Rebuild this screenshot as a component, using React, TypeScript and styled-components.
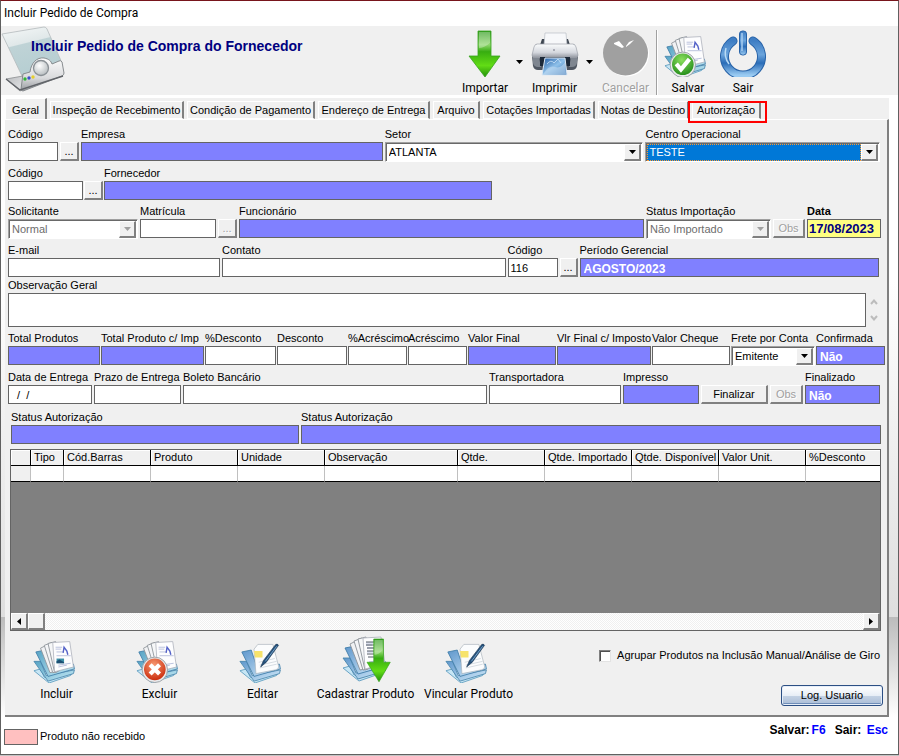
import React, { useId } from "react";
import styled, { createGlobalStyle, css } from "styled-components";

const sans = '"Liberation Sans", Arial, sans-serif';
const ui = 'Roboto, "Noto Sans", sans-serif';
const face = "#f0f0f0";
const edge = "#646464";
const periwinkle = "#8080ff";

const Global = createGlobalStyle`
  * { box-sizing: border-box; }
  body { margin: 0; background: #c4c4c4; font: 11px/15px ${sans}; color: #000; }
  button, input, select, textarea { font: inherit; color: inherit; margin: 0; border-radius: 0; }
`;

/* ---------- window frame ---------- */

const Frame = styled.main`
  display: flex;
  flex-direction: column;
  border: 1px solid #606060;
  border-top-color: #78151c;
  background: #fff;
  margin-bottom: 2px;
`;

const TitleBar = styled.header`
  height: 25px;
  padding-left: 3px;
  font: 12px/24px ${ui};
`;

const Header = styled.section`
  display: flex;
  height: 69px;
  background: ${face};
`;

const Brand = styled.div`
  display: grid;
  width: 457px;
  flex: none;
  & > * { grid-area: 1 / 1; }
`;

const Heading = styled.h1`
  margin: 12px 0 0 30px;
  font: bold 14px/17px ${sans};
  color: #000080;
  white-space: nowrap;
`;

const Tools = styled.nav`
  display: flex;
  padding-top: 4px;
`;

const ToolButton = styled.button<{ $w: number }>`
  display: flex;
  flex-direction: column;
  align-items: center;
  flex: none;
  width: ${p => p.$w}px;
  height: 65px;
  padding: 0;
  border: 0;
  background: none;
  font: 12px/16px ${ui};
  white-space: nowrap;
  & > svg { flex: none; margin-bottom: 3px; }
  &:disabled { color: #a0a0a0; text-shadow: 1px 1px #fff; }
`;

const DropButton = styled.button`
  width: 15px;
  height: 64px;
  padding: 0;
  border: 0;
  background: none;
  line-height: 0;
`;

const Divider = styled.span`
  width: 2px;
  margin: 0 3px 0 2px;
  border-left: 1px solid #a0a0a0;
  border-right: 1px solid #fff;
`;

const Body = styled.section`
  padding: 3px 9px 0 4px;
  background: linear-gradient(#fff 0, #fff 30%, #dedede 84%, #bcbcbc 84%, #fff 100%);
`;

/* ---------- tabs ---------- */

const TabStrip = styled.div`
  display: flex;
  align-items: flex-end;
  gap: 3px;
  height: 21px;
  background: ${face};
`;

const Tab = styled.button<{ $w: number; $marked?: boolean }>`
  position: relative;
  flex: none;
  width: ${p => p.$w}px;
  height: 18px;
  padding: 0;
  border: 0;
  border-top: 1px solid #fff;
  border-left: 1px solid #fff;
  border-right: 2px solid #808080;
  border-bottom: 1px solid #fff;
  background: ${face};
  line-height: 17px;
  white-space: nowrap;
  &[aria-selected="true"] { height: 21px; border-bottom: 0; line-height: 23px; }
  ${p => p.$marked && css`
    &::after {
      content: "";
      position: absolute;
      inset: -1px -8px -5px -5px;
      border: 2px solid #f00;
    }
  `}
`;

const Panel = styled.form`
  padding-top: 7px;
  border-top: 1px solid #fff;
  border-right: 2px solid #808080;
  border-bottom: 2px solid #808080;
  background: ${face};
`;

/* ---------- fields ---------- */

const Row = styled.div<{ $cols: string; $gap?: number; $top?: number; $left?: number; $end?: number }>`
  display: grid;
  grid-template-columns: ${p => p.$cols};
  align-items: end;
  column-gap: ${p => p.$gap ?? 2}px;
  margin: ${p => p.$top ?? 5}px ${p => p.$end ?? 7}px 0 ${p => p.$left ?? 3}px;
`;

const Field = styled.label<{ $bold?: boolean }>`
  display: flex;
  flex-direction: column;
  min-width: 0;
  white-space: nowrap;
  font-weight: ${p => (p.$bold ? "bold" : "normal")};
`;

const Input = styled.input<{ $tone?: "fill" | "date" }>`
  width: 100%;
  height: 19px;
  padding: 0 2px;
  border: 1px solid ${edge};
  background: #fff;
  outline: 0;
  ${p => p.$tone === "fill" && css`
    padding: 2px 3px 0;
    background: ${periwinkle};
    color: #fff;
    font: bold 12px/16px ${sans};
  `}
  ${p => p.$tone === "date" && css`
    padding: 0 1px;
    background: #ffff80;
    color: #000080;
    font: bold 13px/16px ${sans};
  `}
`;

const Area = styled.textarea`
  display: block;
  width: 100%;
  height: 34px;
  padding: 2px;
  border: 1px solid ${edge};
  background: #fff;
  resize: none;
  outline: 0;
`;

const raised = css`
  border: 1px solid #fff;
  border-right: 2px solid #808080;
  border-bottom: 2px solid #808080;
  background: ${face};
`;

const Push = styled.button`
  ${raised}
  width: 100%;
  height: 19px;
  padding: 0;
  line-height: 14px;
  &:disabled { color: #a0a0a0; text-shadow: 1px 1px #fff; }
`;

const ComboBox = styled.span<{ $active?: boolean; $off?: boolean }>`
  display: grid;
  height: 20px;
  margin-bottom: -1px;
  border: 1px solid #a0a0a0;
  border-right-color: #fff;
  border-bottom-color: #fff;
  outline: 0;
  background: #fff;
  box-shadow: inset 1px 1px #696969;
  padding: 1px 1px 0 1px;
  color: ${p => (p.$off ? "#6d6d6d" : "#000")};
  & > * { grid-area: 1 / 1; }
  & > select {
    appearance: none;
    width: calc(100% - 17px);
    height: 17px;
    padding: 0 2px;
    border: 0;
    outline: ${p => (p.$active ? "1px dotted #ff9a30" : "0")};
    outline-offset: -1px;
    background: ${p => (p.$active ? "#0078d7" : "transparent")};
    color: ${p => (p.$active ? "#fff" : "inherit")};
    opacity: 1;
  }
`;

const ComboArrow = styled.span`
  ${raised}
  display: grid;
  place-items: center;
  justify-self: end;
  width: 17px;
  height: 17px;
  pointer-events: none;
`;

const MemoRow = styled.div`
  display: grid;
  grid-template-columns: minmax(0, 1fr) 16px;
  margin: 1px 5px 0 3px;
`;

const Arrows = styled.span`
  display: flex;
  flex-direction: column;
  justify-content: space-between;
  align-items: center;
  padding: 21px 0 6px;
`;

/* ---------- grid ---------- */

const GridBox = styled.div`
  margin: 5px 6px 0 5px;
  border: 1px solid ${edge};
  background: #808080;
`;

const GridView = styled.div`
  height: 163px;
  overflow: hidden;
`;

const Table = styled.table`
  width: 100%;
  table-layout: fixed;
  border-collapse: separate;
  border-spacing: 0;
  th, td { height: 16px; padding: 0; border-bottom: 1px solid #000; }
  th {
    padding-left: 3px;
    border-right: 1px solid #000;
    background: ${face};
    box-shadow: inset 1px 1px #fff;
    font-weight: normal;
    line-height: 15px;
    text-align: left;
    white-space: nowrap;
  }
  td { border-right: 1px solid #c0c0c0; background: #fff; }
  td:first-child { background: ${face}; }
  th:last-child, td:last-child { border-right: 0; }
`;

const Col = styled.col<{ $w?: number }>`
  width: ${p => (p.$w ? `${p.$w}px` : "auto")};
`;

const ScrollBar = styled.div`
  display: flex;
  height: 17px;
  background: repeating-conic-gradient(#fff 0 25%, #f0f0f0 0 50%) 0 0 / 2px 2px;
`;

const ScrollPart = styled.button<{ $last?: boolean }>`
  ${raised}
  display: grid;
  place-items: center;
  width: 17px;
  height: 17px;
  padding: 0;
  margin-left: ${p => (p.$last ? "auto" : "0")};
`;

/* ---------- bottom ---------- */

const Bottom = styled.div`
  display: flex;
  justify-content: space-between;
  height: 84px;
  padding-top: 4px;
`;

const Actions = styled.div`
  display: flex;
`;

const Side = styled.div`
  display: flex;
  flex-direction: column;
  align-items: flex-end;
  padding: 13px 4px 0 0;
`;

const Check = styled.label`
  display: flex;
  align-items: center;
  gap: 6px;
  margin-right: 3px;
  white-space: nowrap;
  input {
    appearance: none;
    width: 12px;
    height: 12px;
    border: 1px solid #808080;
    border-right-color: #e3e3e3;
    border-bottom-color: #e3e3e3;
    background: #fff;
    box-shadow: inset 1px 1px #505050;
  }
`;

const LogButton = styled.button`
  width: 102px;
  height: 21px;
  margin-top: 22px;
  padding: 0;
  border: 1px solid #2c4f84;
  border-radius: 3px;
  background: linear-gradient(#fff 0, #e8eef6 50%, #c4d2e4 52%, #a9bcd6 100%);
  box-shadow: inset 0 0 0 1px #e6eef8, inset 0 -2px #6f8db8;
`;

const Footer = styled.footer`
  display: flex;
  justify-content: space-between;
  height: 37px;
  padding: 0 10px 0 3px;
`;

const Legend = styled.div`
  display: flex;
  align-items: center;
  gap: 2px;
  margin-top: 2px;
`;

const Swatch = styled.span`
  width: 34px;
  height: 16px;
  border: 1px solid ${edge};
  background: #ffc0c0;
`;

const Keys = styled.div`
  display: flex;
  gap: 9px;
  padding-top: 5px;
  font: bold 12px/16px ${sans};
  kbd { font: inherit; color: #0000ff; margin-left: 2px; }
`;

/* ---------- drawings ---------- */

const Caret = ({ color = "#000" }: { color?: string }) => (
  <svg width="7" height="4" viewBox="0 0 7 4"><path d="M0 0h7L3.5 4z" fill={color} /></svg>
);

const Chevron = ({ down }: { down?: boolean }) => (
  <svg width="8" height="6" viewBox="0 0 8 6">
    <path d={down ? "M1 1l3 3.5L7 1" : "M1 5l3-3.5L7 5"} fill="none" stroke="#bcbcbc" strokeWidth="2" />
  </svg>
);

const LogoIcon = () => (
  <svg width="66" height="69" viewBox="0 0 66 69">
    <defs>
      <linearGradient id="lg-glass" x1="0" y1="0" x2=".3" y2="1">
        <stop offset="0" stopColor="#f6f8f8" /><stop offset=".4" stopColor="#e0e8e9" />
        <stop offset=".42" stopColor="#bfd3d6" /><stop offset="1" stopColor="#b6ced2" />
      </linearGradient>
      <linearGradient id="lg-base" x1="0" y1="0" x2="0" y2="1">
        <stop offset="0" stopColor="#fcfcfc" /><stop offset=".6" stopColor="#dadbdd" /><stop offset="1" stopColor="#96999d" />
      </linearGradient>
      <linearGradient id="lg-flap" x1="0" y1="0" x2="1" y2="1">
        <stop offset="0" stopColor="#b9bbbe" /><stop offset="1" stopColor="#e6e7e9" />
      </linearGradient>
      <radialGradient id="lg-lens" cx=".4" cy=".35" r=".7">
        <stop offset="0" stopColor="#fff" /><stop offset="1" stopColor="#b4babd" />
      </radialGradient>
    </defs>
    <path d="M1 8L43 1q2 0 3 2l15 34-40 13z" fill="url(#lg-glass)" stroke="#b4babc" strokeWidth=".8" />
    <path d="M5 53l17-3-1 14-2 1z" fill="url(#lg-flap)" stroke="#8b8e92" strokeWidth=".8" />
    <path d="M22 48l7-2c1-9 7-15 14-14 5 1 7 3 8 6l7-3q2-1 3 1l2 11q0 2-2 3L22 65q-2 0-2-2z" fill="url(#lg-base)" stroke="#7e8286" strokeWidth=".9" />
    <path d="M5 53l14 11 43-14" fill="none" stroke="#606368" strokeWidth="1.4" />
    <circle cx="40" cy="42" r="7.500" fill="url(#lg-lens)" stroke="#8a9095" strokeWidth="1.300" />
    <circle cx="24" cy="53" r="1.700" fill="#31b43a" /><circle cx="28" cy="52" r="1.700" fill="#3c50c8" /><circle cx="32" cy="51" r="1.700" fill="#e6cf2d" />
  </svg>
);

const ArrowShape = ({ id }: { id: string }) => (
  <>
    <linearGradient id={id} x1="0" y1="0" x2="0" y2="1">
      <stop offset="0" stopColor="#2f9a1c" /><stop offset=".3" stopColor="#8ed66c" />
      <stop offset=".45" stopColor="#37ad10" /><stop offset=".75" stopColor="#62dc15" /><stop offset="1" stopColor="#228f0a" />
    </linearGradient>
    <path d="M9 0h13v25h9L16 46 0 25h9z" fill={`url(#${id})`} stroke="#37a31e" strokeWidth=".8" />
    <path d="M10 1h11v11q-6 5-11 5z" fill="#fff" opacity=".3" />
  </>
);

const ImportIcon = () => (
  <svg width="48" height="47" viewBox="-8 -1 48 47"><ArrowShape id="imp-green" /></svg>
);

const PrinterIcon = () => (
  <svg width="48" height="47" viewBox="0 0 48 47">
    <defs>
      <linearGradient id="pr-body" x1="0" y1="0" x2="0" y2="1">
        <stop offset="0" stopColor="#fbfcfd" /><stop offset=".6" stopColor="#d5d8de" /><stop offset="1" stopColor="#8d929b" />
      </linearGradient>
      <linearGradient id="pr-photo" x1="0" y1="0" x2="1" y2="1">
        <stop offset="0" stopColor="#1f58a0" /><stop offset=".5" stopColor="#8fc1ea" /><stop offset="1" stopColor="#2f6cae" />
      </linearGradient>
    </defs>
    <path d="M11 9h4v6h18V9h4l2 6H9z" fill="#3d4550" />
    <path d="M14 3h21l1 12H13z" fill="#f7f8fa" stroke="#b9bec6" strokeWidth=".7" />
    <path d="M5 14h38l4 12-1 10q-1 4-5 4H7q-4 0-5-4L1 26z" fill="#505762" />
    <path d="M6 14h36q2 0 3 3l2 8q0 3-3 3H4q-3 0-3-3l2-8q1-3 3-3z" fill="url(#pr-body)" stroke="#9da2ab" strokeWidth=".7" />
    <path d="M2 28h6l2 9H7q-4 0-5-4zM40 28h6v5q-1 4-5 4h-3z" fill="#7f8690" />
    <path d="M9 27h30v9H9z" fill="#1c2939" />
    <path d="M14 28h20l2 17H11z" fill="url(#pr-photo)" stroke="#dde8f3" />
    <path d="M13 43q5-8 11-6t10-5l1 12H12z" fill="#c9dff3" opacity=".55" />
    <path d="M16 34q4-5 7-1l4-4 3 4" fill="none" stroke="#d8ecff" opacity=".7" />
    <circle cx="23" cy="20" r=".8" fill="#667" />
  </svg>
);

const CancelIcon = () => (
  <svg width="48" height="47" viewBox="0 0 48 47">
    <circle cx="24.500" cy="24" r="22.500" fill="#fff" />
    <circle cx="23.500" cy="23" r="22.500" fill="#a0a0a0" />
    <path d="M12 13l5-2 5 6-2 1-2-1-6-3zM24 16l3-4 5-2-4 4-4 3z" fill="#fff" />
  </svg>
);

const PowerIcon = () => (
  <svg width="48" height="47" viewBox="0 0 48 47">
    <defs>
      <linearGradient id="pw-blue" x1="0" y1="0" x2="0" y2="1">
        <stop offset="0" stopColor="#3f7ec4" /><stop offset=".4" stopColor="#6ba4dc" /><stop offset=".65" stopColor="#2b6db8" /><stop offset="1" stopColor="#9acbf2" />
      </linearGradient>
    </defs>
    <path d="M14 11A18.500 18.500 0 1 0 34 11" fill="none" stroke="#2863a8" strokeWidth="9" strokeLinecap="round" />
    <path d="M14 11A18.500 18.500 0 1 0 34 11" fill="none" stroke="url(#pw-blue)" strokeWidth="7" strokeLinecap="round" />
    <path d="M7 18A18 18 0 0 0 10 34" fill="none" stroke="#b9dbf5" strokeWidth="1.500" />
    <rect x="19" y="0" width="10" height="27" rx="4" fill={face} />
    <rect x="20.500" y="1" width="7" height="24" rx="3" fill="url(#pw-blue)" stroke="#2863a8" />
    <path d="M23 3v18" stroke="#a9cef0" strokeWidth="1.500" />
  </svg>
);

type Kind = "new" | "delete" | "save" | "edit" | "register";

const FolderIcon = ({ kind, box = 48 }: { kind: Kind; box?: number }) => {
  const id = useId().replace(/[^a-zA-Z0-9]/g, "");
  const blue = kind === "edit" || kind === "register";
  const view = kind === "register" ? `1 0 50 ${box}` : `1 -5 53 ${box + 3}`;
  return (
    <svg width="50" height={box} viewBox={view}>
      <defs>
        <linearGradient id={`${id}f`} x1="0" y1="0" x2="1" y2="1">
          <stop offset="0" stopColor={blue ? "#5f97cc" : "#56a3c4"} /><stop offset="1" stopColor={blue ? "#d5ecfb" : "#c6eaf6"} />
        </linearGradient>
        <radialGradient id={`${id}b`} cx=".45" cy=".3" r=".75">
          <stop offset="0" stopColor={kind === "save" ? "#8be05e" : "#f79a72"} /><stop offset="1" stopColor={kind === "save" ? "#208a17" : "#c92708"} />
        </radialGradient>
      </defs>
      <path d="M3 33l7-2 4 9 31-7-3 5-23 8z" fill="#c7e6f5" stroke="#5d9cbf" strokeWidth=".9" />
      <path d="M3 23l7 0 6 15 30-6-1 4-27 8z" fill={`url(#${id}f)`} stroke="#4a86ac" strokeWidth=".9" />
      <path d="M5 13l10-2 6 18 24-3 1 5-28 8z" fill={`url(#${id}f)`} stroke="#3f7da9" strokeWidth=".9" />
      {kind === "edit" ? (
        <>
          <path d="M18 10l4-5h16l6 23q1 3-3 4l-21 4z" fill="#fbfcfd" stroke="#a9b2ba" strokeWidth=".7" />
          <path d="M18 12h9v7h-8z" fill="#f7e36b" />
          <path d="M23 24l17-4M24 27l18-4M24 30l18-4" stroke="#d3dae0" />
          <path d="M41 5q2-1 3 1L31 24l-6 5 3-7z" fill="#234f79" stroke="#16314d" strokeWidth=".6" />
          <path d="M42 7L30 23" stroke="#79a6cc" />
        </>
      ) : (
        <>
          <path d="M10 9l8-4 7 29-5 1z" fill="#f1f2f4" stroke="#8b9197" strokeWidth=".9" />
          <path d="M14 6l8-3 6 31-5 1z" fill="#f4f5f7" stroke="#8b9197" strokeWidth=".9" />
          <path d="M18 4l8-2 4 31-5 2z" fill="#f6f7f8" stroke="#8b9197" strokeWidth=".9" />
          <path d="M23 3l18-1 4 27-20 5z" fill="#fdfdfe" stroke="#a9adb8" strokeWidth=".8" />
          <path d="M26 8h7M26 10h6M27 13h7M27 17h15M29 27l13-2M29 29l9-2" stroke="#b7bfdc" />
          {kind !== "register" && <path d="M34 14l1-6 3 4 1 4" fill="none" stroke="#5462c8" strokeWidth="1.500" />}
          {kind === "new" && <path d="M27 20h8v5h-8z" fill="#3b8fa8" />}
          {kind === "new" && <path d="M27 23l3-2 5 3v1h-8z" fill="#1d4f73" />}
        </>
      )}
      {kind === "register" && (
        <>
          <path d="M26 7h8M26 10h8M27 13h8M27 16h8M27 19h8M28 22h8" stroke="#555d66" />
          <g transform="translate(27 4) scale(.75 .93)"><ArrowShape id={`${id}g`} /></g>
        </>
      )}
      {(kind === "delete" || kind === "save") && (
        <>
          <circle cx="22" cy="32" r="13.500" fill="#e9ebed" stroke="#9ba0a5" />
          <circle cx="22" cy="31.500" r="11.500" fill={`url(#${id}b)`} />
          <path
            d={kind === "delete" ? "M17 26.500l10 10M27 26.500l-10 10" : "M15 31l5 6 9-11"}
            fill="none" stroke="#fff" strokeWidth="4.500"
          />
        </>
      )}
    </svg>
  );
};

/* ---------- composite controls ---------- */

type TextProps = { label: string; value?: string; tone?: "fill" | "date"; bold?: boolean };

const Text = ({ label, value = "", tone, bold }: TextProps) => (
  <Field $bold={bold}>
    {label}
    <Input defaultValue={value} $tone={tone} readOnly={tone === "fill"} />
  </Field>
);

const Combo = ({ label, value, active, off }: { label: string; value: string; active?: boolean; off?: boolean }) => (
  <Field>
    {label}
    <ComboBox $active={active} $off={off}>
      <select disabled={off} defaultValue={value}><option>{value}</option></select>
      <ComboArrow><Caret color={off ? "#a0a0a0" : "#000"} /></ComboArrow>
    </ComboBox>
  </Field>
);

const Lookup = ({ label, disabled }: { label: string; disabled?: boolean }) => (
  <Push type="button" aria-label={label} disabled={disabled}>...</Push>
);

const tabs: [string, number][] = [
  ["Geral", 42], ["Inspeção de Recebimento", 134], ["Condição de Pagamento", 128], ["Endereço de Entrega", 112],
  ["Arquivo", 47], ["Cotações Importadas", 112], ["Notas de Destino", 91], ["Autorização", 69],
];

const columns: [string, number?][] = [
  ["", 20], ["Tipo", 33], ["Cód.Barras", 87], ["Produto", 87], ["Unidade", 87], ["Observação", 133], ["Qtde.", 87],
  ["Qtde. Importado", 87], ["Qtde. Disponível", 87], ["Valor Unit.", 87], ["%Desconto"],
];

const actions: [string, Kind][] = [
  ["Incluir", "new"], ["Excluir", "delete"], ["Editar", "edit"], ["Cadastrar Produto", "register"], ["Vincular Produto", "edit"],
];

export default function App() {
  return (
    <>
      <Global />
      <Frame>
        <TitleBar>Incluir Pedido de Compra</TitleBar>
        <Header>
          <Brand>
            <LogoIcon />
            <Heading>Incluir Pedido de Compra do Fornecedor</Heading>
          </Brand>
          <Tools>
            <ToolButton $w={54}><ImportIcon />Importar</ToolButton>
            <DropButton aria-label="Opções de importação"><Caret /></DropButton>
            <ToolButton $w={55}><PrinterIcon />Imprimir</ToolButton>
            <DropButton aria-label="Opções de impressão"><Caret /></DropButton>
            <ToolButton $w={57} disabled><CancelIcon />Cancelar</ToolButton>
            <Divider />
            <ToolButton $w={54}><FolderIcon kind="save" box={47} />Salvar</ToolButton>
            <ToolButton $w={56}><PowerIcon />Sair</ToolButton>
          </Tools>
        </Header>
        <Body>
          <TabStrip role="tablist">
            {tabs.map(([name, w], i) => (
              <Tab key={name} type="button" role="tab" $w={w} aria-selected={i === 0} $marked={i === tabs.length - 1}>{name}</Tab>
            ))}
          </TabStrip>
          <Panel onSubmit={e => e.preventDefault()}>
            <Row $top={0} $cols="50px 19px minmax(0, 301fr) minmax(0, 258fr) minmax(0, 234fr)">
              <Text label="Código" />
              <Lookup label="Buscar empresa" />
              <Text label="Empresa" tone="fill" />
              <Combo label="Setor" value="ATLANTA" />
              <Combo label="Centro Operacional" value="TESTE" active />
            </Row>
            <Row $gap={1} $cols="75px 19px minmax(0, 388fr) minmax(0, 387fr)">
              <Text label="Código" />
              <Lookup label="Buscar fornecedor" />
              <Text label="Fornecedor" tone="fill" />
            </Row>
            <Row $top={4} $end={6} $cols="130px 76px 19px minmax(0, 1fr) 125px 32px 74px">
              <Combo label="Solicitante" value="Normal" off />
              <Text label="Matrícula" />
              <Lookup label="Buscar funcionário" disabled />
              <Text label="Funcionário" tone="fill" />
              <Combo label="Status Importação" value="Não Importado" off />
              <Push type="button" disabled>Obs</Push>
              <Text label="Data" value="17/08/2023" tone="date" bold />
            </Row>
            <Row $end={8} $cols="212px minmax(0, 284fr) 50px 18px minmax(0, 300fr)">
              <Text label="E-mail" />
              <Text label="Contato" />
              <Text label="Código" value="116" />
              <Lookup label="Buscar período" />
              <Text label="Período Gerencial" value="AGOSTO/2023" tone="fill" />
            </Row>
            <MemoRow>
              <Field>Observação Geral<Area /></Field>
              <Arrows><Chevron /><Chevron down /></Arrows>
            </MemoRow>
            <Row
              $top={4} $end={2} $gap={1}
              $cols="92fr 103fr 71fr 70fr 59fr 59fr 88fr 94fr 78fr 84fr 69fr"
            >
              <Text label="Total Produtos" tone="fill" />
              <Text label="Total Produto c/ Imp" tone="fill" />
              <Text label="%Desconto" />
              <Text label="Desconto" />
              <Text label="%Acréscimo" />
              <Text label="Acréscimo" />
              <Text label="Valor Final" tone="fill" />
              <Text label="Vlr Final c/ Imposto" tone="fill" />
              <Text label="Valor Cheque" />
              <Combo label="Frete por Conta" value="Emitente" />
              <Text label="Confirmada" value="Não" tone="fill" />
            </Row>
            <Row $cols="84px 87px minmax(0, 1fr) 132px 76px 67px 33px 75px">
              <Text label="Data de Entrega" value="  /  /" />
              <Text label="Prazo de Entrega" />
              <Text label="Boleto Bancário" />
              <Text label="Transportadora" />
              <Text label="Impresso" tone="fill" />
              <Push type="button">Finalizar</Push>
              <Push type="button" disabled>Obs</Push>
              <Text label="Finalizado" value="Não" tone="fill" />
            </Row>
            <Row $top={6} $left={6} $end={6} $cols="minmax(0, 288fr) minmax(0, 580fr)">
              <Text label="Status Autorização" tone="fill" />
              <Text label="Status Autorização" tone="fill" />
            </Row>
            <GridBox>
              <GridView>
                <Table>
                  <colgroup>{columns.map(([name, w]) => <Col key={name} $w={w} />)}</colgroup>
                  <thead><tr>{columns.map(([name]) => <th key={name} scope="col">{name}</th>)}</tr></thead>
                  <tbody><tr>{columns.map(([name]) => <td key={name} />)}</tr></tbody>
                </Table>
              </GridView>
              <ScrollBar>
                <ScrollPart type="button" aria-label="Rolar à esquerda">
                  <svg width="4" height="7" viewBox="0 0 4 7"><path d="M4 0v7L0 3.500z" /></svg>
                </ScrollPart>
                <ScrollPart type="button" aria-label="Posição" />
                <ScrollPart type="button" aria-label="Rolar à direita" $last>
                  <svg width="4" height="7" viewBox="0 0 4 7"><path d="M0 0v7l4-3.500z" /></svg>
                </ScrollPart>
              </ScrollBar>
            </GridBox>
            <Bottom>
              <Actions>
                {actions.map(([name, kind]) => (
                  <ToolButton key={name} type="button" $w={103}><FolderIcon kind={kind} />{name}</ToolButton>
                ))}
              </Actions>
              <Side>
                <Check><input type="checkbox" />Agrupar Produtos na Inclusão Manual/Análise de Giro</Check>
                <LogButton type="button">Log. Usuario</LogButton>
              </Side>
            </Bottom>
          </Panel>
        </Body>
        <Footer>
          <Legend><Swatch />Produto não recebido</Legend>
          <Keys><span>Salvar:<kbd>F6</kbd></span><span>Sair: <kbd>Esc</kbd></span></Keys>
        </Footer>
      </Frame>
    </>
  );
}
